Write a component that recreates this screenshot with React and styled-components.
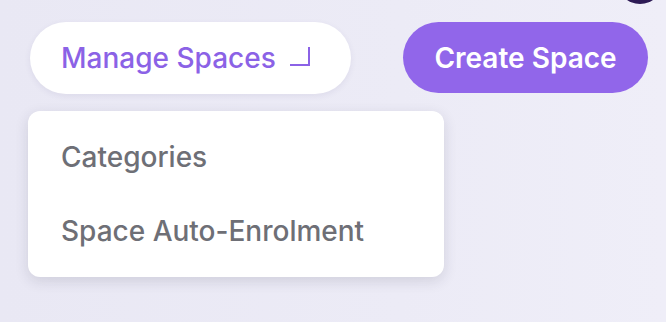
import React from 'react';
import styled, { createGlobalStyle } from 'styled-components';

const GlobalStyle = createGlobalStyle`
  html, body {
    margin: 0;
    padding: 0;
    background: #ebeaf5;
    font-family: Inter, "Noto Sans", sans-serif;
  }
`;

function CornerIcon() {
  return (
    <svg width="22" height="20" viewBox="0 0 22 20" fill="none">
      <path d="M1 19H20V1" stroke="currentColor" strokeWidth="2" />
    </svg>
  );
}

function App() {
  return (
    <Page>
      <GlobalStyle />
      <Avatar />
      <Toolbar>
        <MenuWrap>
          <ManageButton>
            <span>Manage Spaces</span>
            <CornerIcon />
          </ManageButton>
          <Menu>
            <MenuItem>Categories</MenuItem>
            <MenuItem>Space Auto-Enrolment</MenuItem>
          </Menu>
        </MenuWrap>
        <CreateButton>Create Space</CreateButton>
      </Toolbar>
    </Page>
  );
}

export default App;

const Page = styled.div`
  position: relative;
  width: 666px;
  height: 322px;
  overflow: hidden;
  background: linear-gradient(90deg, #e9e8f4 0%, #ecebf6 60%, #efeef8 100%);
  padding: 22px 0 0 30px;
  box-sizing: border-box;
`;

const Avatar = styled.div`
  position: absolute;
  top: -42px;
  right: 3px;
  width: 46px;
  height: 46px;
  border-radius: 50%;
  background: #2d1a55;
`;

const Toolbar = styled.div`
  display: flex;
  align-items: flex-start;
  gap: 52px;
`;

const MenuWrap = styled.div`
  position: relative;
`;

const ManageButton = styled.button`
  display: flex;
  align-items: center;
  gap: 13px;
  height: 72px;
  width: 321px;
  padding: 0 0 0 31px;
  border: none;
  border-radius: 36px;
  background: #ffffff;
  color: #8b62e6;
  font-family: Inter, sans-serif;
  font-size: 28px;
  font-weight: 500;
  box-shadow: 0 2px 6px rgba(60, 50, 110, 0.08);
  cursor: pointer;

  svg {
    margin-top: -4px;
  }
`;

const CreateButton = styled.button`
  height: 71px;
  width: 245px;
  padding: 0;
  border: none;
  border-radius: 36px;
  background: #9166ea;
  color: #ffffff;
  font-family: Inter, sans-serif;
  font-size: 28px;
  font-weight: 600;
  cursor: pointer;
`;

const Menu = styled.div`
  position: absolute;
  top: 89px;
  left: -2px;
  width: 416px;
  padding: 9px 0;
  box-sizing: border-box;
  background: #ffffff;
  border-radius: 12px;
  box-shadow: 0 4px 14px rgba(40, 40, 70, 0.14);
`;

const MenuItem = styled.div`
  height: 74px;
  display: flex;
  align-items: center;
  padding-left: 33px;
  color: #6e6f76;
  font-size: 28px;
  font-weight: 500;
`;
